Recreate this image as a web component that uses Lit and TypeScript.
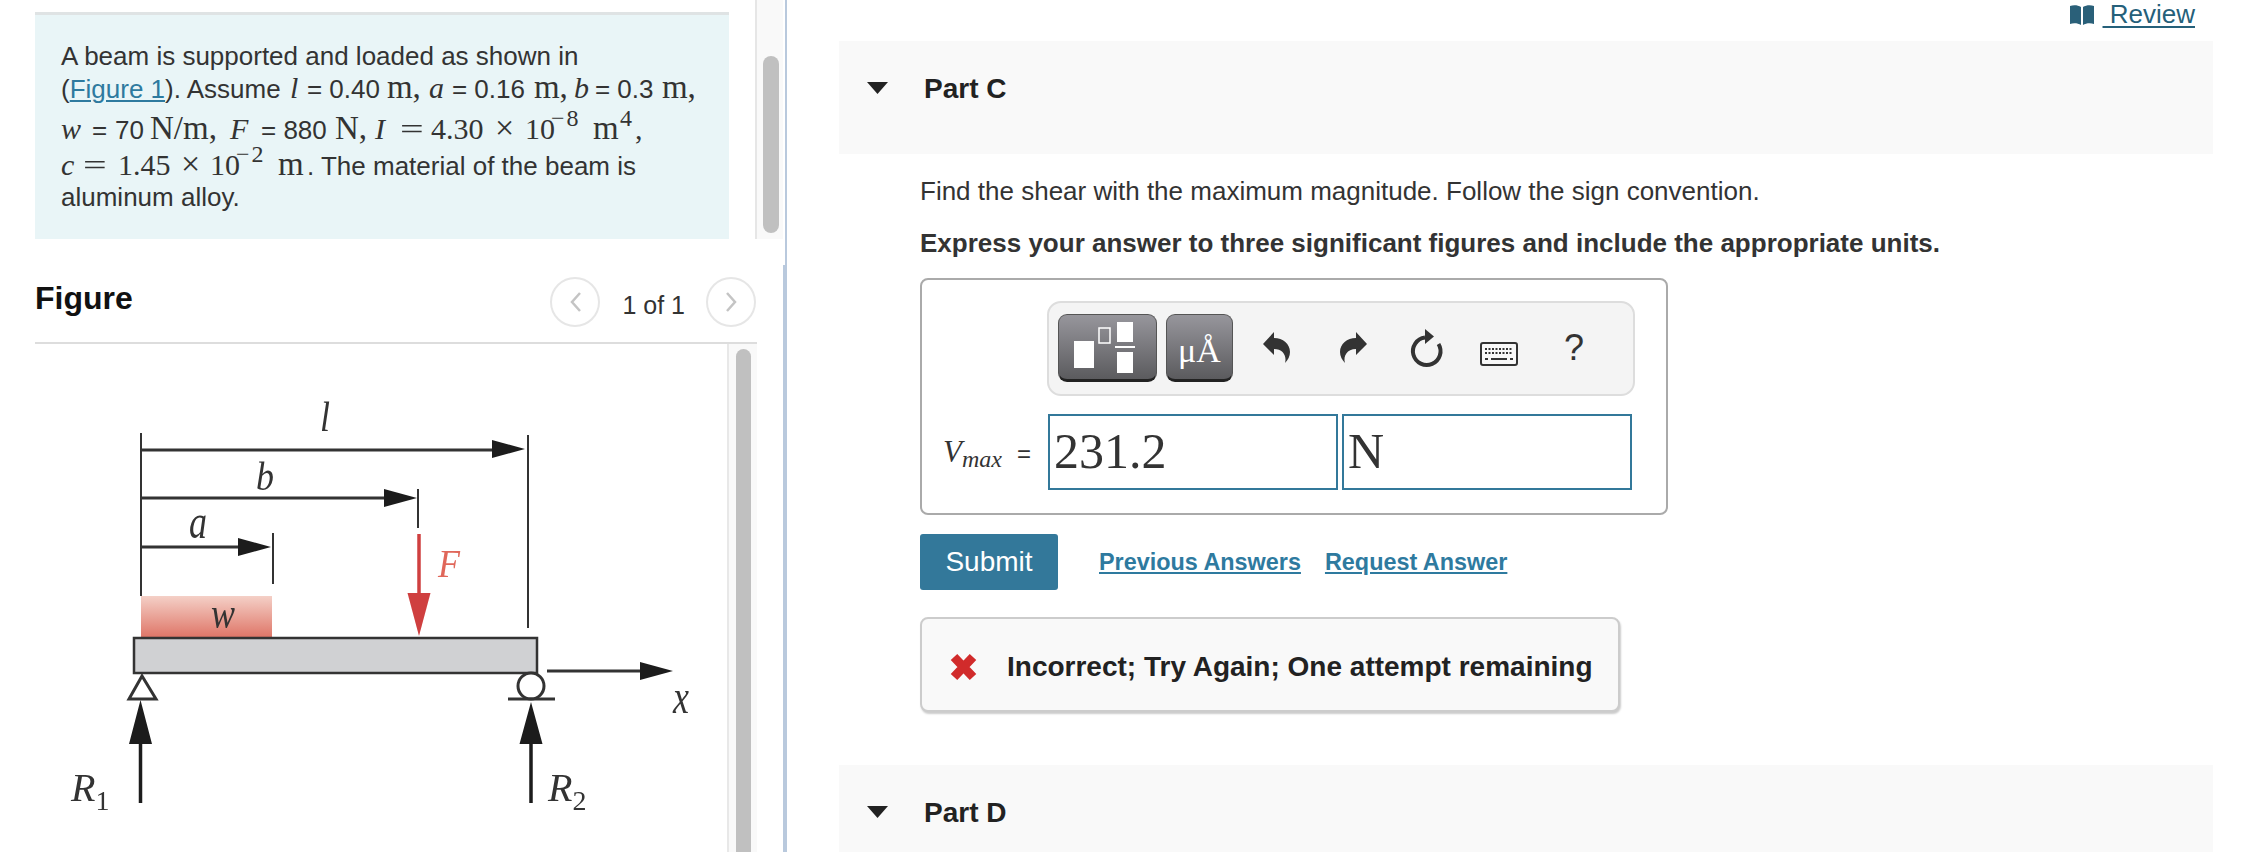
import { LitElement, css, html, svg } from 'lit';
import { customElement } from 'lit/decorators.js';

const caret = html`<svg class="caret" viewBox="0 0 21 12"><path d="M0 0H21L10.5 12Z" fill="#222"/></svg>`;

const arrowHead = (x: number, y: number, len: number, half: number) =>
  svg`<path d="M${x} ${y}L${x - len} ${y - half}V${y + half}Z" fill="#1c1c1c"/>`;

// the figure's letters are a tall narrow italic, so stretch the serif vertically
const label = (x: number, y: number, text: string, stretch: number, fill = '#333') =>
  svg`<text transform="translate(${x} ${y}) scale(1 ${stretch})" font-size="36" text-anchor="middle" style="fill:${fill}">${text}</text>`;

// typeset math runs: text, style class, advance in px
type Tok = [string, string, number];

const runs = (toks: Tok[]) =>
  toks.map(([text, cls, w]) => html`<span class="t ${cls}" style="width:${w}px">${text}</span>`);

const line2: Tok[] = [
  ['', 's', 2],
  ['l', 'i', 17],
  ['= 0.40', 's', 80],
  ['m,', 'u', 42],
  ['a', 'i', 23],
  ['= 0.16', 's', 82],
  ['m,', 'u', 40],
  ['b', 'i', 21],
  ['= 0.3', 's', 67],
  ['m,', 'u', 38],
];

const line3: Tok[] = [
  ['w', 'i', 31],
  ['=', 's', 23],
  ['70', 's', 35],
  ['N/m,', 'u', 80],
  ['F', 'i', 31],
  ['= 880', 's', 74],
  ['N,', 'u', 40],
  ['I', 'i', 25],
  ['=', 'eq', 31],
  ['4.30', 'n', 64],
  ['×', 'x', 30],
  ['10', 'n', 26],
  ['−8', 'up', 42],
  ['m', 'u', 27],
  ['4', 'up', 15],
  [',', 'n', 10],
];

const line4: Tok[] = [
  ['c', 'i', 22],
  ['=', 'eq', 35],
  ['1.45', 'n', 63],
  ['×', 'x', 29],
  ['10', 'n', 26],
  ['−2', 'up', 42],
  ['m', 'u', 29],
];

@customElement('beam-figure')
export class BeamFigure extends LitElement {
  static override styles = css`
    :host { display: block; width: 727px; height: 508px; flex: none; }
    svg { display: block; filter: blur(0.4px); }
    text { font-family: "Liberation Serif", serif; font-style: italic; fill: #333; }
  `;

  override render() {
    // coordinates are page px, the viewBox starts where the figure area starts
    return html`<svg width="727" height="508" viewBox="0 344 727 508">
      <defs>
        <linearGradient id="load" x1="0" y1="0" x2="0" y2="1">
          <stop offset="0" stop-color="#f4d0c7"/>
          <stop offset="1" stop-color="#df7668"/>
        </linearGradient>
      </defs>
      <g stroke="#333" stroke-width="2" fill="none">
        <path d="M141 433V596M528 435V628M418 489V528M273 533V584"/>
        <path d="M141 450H495M141 498H388M141 547H240" stroke-width="3"/>
      </g>
      ${arrowHead(525, 449, 33, 9)}
      ${arrowHead(417, 498, 33, 9)}
      ${arrowHead(271, 547, 33, 9)}
      <rect x="141" y="596" width="131" height="41" fill="url(#load)"/>
      <rect x="134" y="638" width="403" height="35" fill="#d0d1d3" stroke="#333" stroke-width="2.5"/>
      <path d="M419 534V595" stroke="#cf3f3f" stroke-width="3.5"/>
      <path d="M407.500 593H430.500L419 636Z" fill="#cf3f3f"/>
      <path d="M142 676L129 699H156Z" fill="#fff" stroke="#333" stroke-width="3"/>
      <ellipse cx="531" cy="686" rx="13" ry="13" fill="#fff" stroke="#333" stroke-width="3"/>
      <path d="M508 699H555" stroke="#333" stroke-width="3"/>
      <path d="M547 671H645" stroke="#333" stroke-width="3"/>
      ${arrowHead(673, 671, 33, 9)}
      <path d="M140.500 803V742M531 803V742" stroke="#1c1c1c" stroke-width="3.500"/>
      <path d="M129 744H152L140.500 700Z M519.500 744H542.500L531 702Z" fill="#1c1c1c"/>
      ${label(325, 431, 'l', 1.15)}
      ${label(265, 490, 'b', 1.12)}
      ${label(198, 538, 'a', 1.35)}
      ${label(449, 577, 'F', 1.1, '#e0675a')}
      ${label(223, 628, 'w', 1.25)}
      ${label(681, 713, 'x', 1.35)}
      <text x="71" y="801" font-size="40">R<tspan dy="9" font-size="28" font-style="normal">1</tspan></text>
      <text x="548" y="801" font-size="40">R<tspan dy="9" font-size="28" font-style="normal">2</tspan></text>
    </svg>`;
  }
}

@customElement('app-root')
export class AppRoot extends LitElement {
  static override styles = css`
    :host {
      display: flex;
      width: 2258px;
      height: 852px;
      overflow: hidden;
      background: #fff;
      color: #333;
      font-family: "Liberation Sans", Arial, sans-serif;
      font-size: 26px;
    }
    a { color: #2e7a9f; }
    .left { width: 783px; flex: none; display: flex; flex-direction: column; }
    .divider { width: 4px; flex: none; display: flex; flex-direction: column; }
    .divider .thin { height: 265px; margin-left: 2px; background: #b9c9dd; }
    .divider .thick { flex: 1; background: #b9c9dd; }
    .topRow { display: flex; height: 239px; flex: none; }
    .problem {
      box-sizing: border-box;
      width: 694px;
      margin-left: 35px;
      margin-right: 26px;
      background: #e9f5f7;
      border-top: 3px solid #dfe3e4;
      margin-top: 12px;
      padding: 25px 0 0 26px;
      flex: none;
    }
    .ln { white-space: nowrap; height: 32px; line-height: 32px; }
    .ln2 { line-height: 30px; }
    .ln3 { height: 40px; line-height: 47px; }
    .ln4 { height: 37px; line-height: 39px; }
    .t { display: inline-block; white-space: pre; }
    .t.i { font-family: "Liberation Serif", serif; font-style: italic; font-size: 30px; }
    .t.u { font-family: "Liberation Serif", serif; font-size: 33px; }
    .t.n { font-family: "Liberation Serif", serif; font-size: 30px; }
    .t.eq { font-family: "Liberation Serif", serif; font-size: 30px; transform: scaleX(1.4); transform-origin: left; }
    .t.x { font-family: "Liberation Serif", serif; font-size: 34px; }
    .t.up { font-family: "Liberation Serif", serif; font-size: 24px; letter-spacing: 2px; position: relative; top: -13px; }
    .track { width: 28px; background: #f9f9f9; border-left: 2px solid #e6e6e6; box-sizing: border-box; padding: 56px 4px 6px 6px; flex: none; }
    .thumb { height: 100%; background: #c0c0c0; border-radius: 8px; }
    .figHead { display: flex; align-items: center; height: 105px; margin-left: 35px; width: 722px; box-sizing: border-box; border-bottom: 2px solid #ddd; flex: none; }
    .figTitle { font-weight: bold; font-size: 32px; color: #111; margin-right: auto; margin-top: 16px; }
    .circle { box-sizing: border-box; width: 50px; height: 50px; border: 2px solid #e6e6e6; border-radius: 50%; display: flex; align-items: center; justify-content: center; margin-top: 22px; margin-right: 1px; }
    .circle svg { width: 13px; height: 22px; }
    .pager { margin: 30px 21px 0; font-size: 25px; color: #333; }
    .figRow { display: flex; flex: 1; min-height: 0; }
    .figTrack { width: 30px; background: #f9f9f9; border-left: 2px solid #e8e8e8; box-sizing: border-box; padding: 5px 6px 0 7px; flex: none; }
    .figTrack .thumb { border-radius: 8px 8px 0 0; }

    .right { flex: 1; min-width: 0; padding-left: 52px; padding-right: 45px; }
    .reviewBar { height: 41px; display: flex; justify-content: flex-end; align-items: flex-start; padding-right: 18px; }
    .review { display: flex; align-items: center; gap: 8px; color: #25607a; text-decoration: underline; text-underline-offset: 3px; font-size: 26px; line-height: 29px; }
    .review svg { width: 26px; height: 22px; }
    .partHead { display: flex; align-items: center; background: #f9f9f9; font-weight: bold; font-size: 28px; color: #222; padding-left: 28px; height: 113px; padding-bottom: 20px; box-sizing: border-box; }
    .partHead span { margin-top: 2px; }
    .partHead.d { height: 130px; margin-top: 53px; padding-bottom: 36px; }
    .caret { width: 21px; height: 12px; margin-right: 36px; }
    .body { padding-left: 81px; }
    .q { margin: 23px 0 0; line-height: 28px; font-size: 26px; }
    .q.b { font-weight: bold; margin-top: 24px; }
    .answer { box-sizing: border-box; width: 748px; height: 237px; margin-top: 21px; border: 2px solid #aaa; border-radius: 8px; padding: 21px 0 0 125px; }
    .tools { box-sizing: border-box; width: 588px; height: 95px; background: #f4f4f4; border: 2px solid #ddd; border-radius: 14px; display: flex; align-items: flex-start; }
    .btn { box-sizing: border-box; height: 68px; margin-top: 11px; border-radius: 9px; background: linear-gradient(#97969c, #5b5b5e); border: 1px solid #555; border-bottom: 3px solid #222; flex: none; color: #fff; }
    .btn.tpl { width: 99px; margin-left: 9px; }
    .btn.tpl svg { display: block; }
    .btn.unit { width: 67px; margin-left: 9px; font-family: "Liberation Serif", serif; font-size: 34px; text-align: center; line-height: 72px; }
    .ic { flex: none; margin-top: 29px; }
    .undo { margin-left: 30px; width: 27px; height: 31px; }
    .redo { margin-left: 50px; width: 27px; height: 31px; }
    .reset { margin-left: 41px; width: 36px; height: 40px; margin-top: 26px; }
    .kbd { margin-left: 36px; width: 38px; height: 24px; margin-top: 39px; }
    .help { margin-left: 46px; font-size: 36px; line-height: 36px; margin-top: 27px; color: #333; }
    .ansRow { display: flex; align-items: center; margin-top: 18px; gap: 4px; margin-left: -125px; }
    .lbl { width: 126px; box-sizing: border-box; padding-left: 21px; white-space: nowrap; font-size: 24px; flex: none; margin-right: -4px; }
    .lbl .v { font-family: "Liberation Serif", serif; font-style: italic; font-size: 31px; }
    .lbl .s { font-family: "Liberation Serif", serif; font-style: italic; font-size: 24px; position: relative; top: 5px; margin-right: 15px; }
    .box { box-sizing: border-box; height: 76px; width: 290px; border: 2px solid #33789a; font-family: "Liberation Serif", serif; font-size: 50px; line-height: 70px; padding-left: 4px; color: #333; }
    .actions { display: flex; align-items: center; margin-top: 19px; }
    .submit { box-sizing: border-box; width: 138px; height: 56px; background: #33789a; color: #fff; border-radius: 3px; font-size: 28px; display: flex; align-items: center; justify-content: center; }
    .link { font-weight: bold; font-size: 23.4px; margin-left: 24px; }
    .link.first { margin-left: 41px; }
    .feedback { box-sizing: border-box; width: 700px; height: 95px; margin-top: 27px; background: #f9f9f9; border: 2px solid #ccc; border-radius: 8px; box-shadow: 1px 2px 2px #ccc; display: flex; align-items: center; padding: 4px 0 0 27px; font-weight: bold; font-size: 28px; color: #222; }
    .feedback svg { width: 29px; height: 28px; margin-right: 29px; flex: none; }
  `;

  override render() {
    return html`
      <div class="left">
        <div class="topRow">
          <div class="problem">
            <div class="ln">A beam is supported and loaded as shown in</div>
            <div class="ln ln2">(<a href="#">Figure 1</a>). Assume ${runs(line2)}</div>
            <div class="ln ln3">${runs(line3)}</div>
            <div class="ln ln4">${runs(line4)}. The material of the beam is</div>
            <div class="ln">aluminum alloy.</div>
          </div>
          <div class="track"><div class="thumb"></div></div>
        </div>
        <div class="figHead">
          <div class="figTitle">Figure</div>
          <div class="circle"><svg viewBox="0 0 13 22"><path d="M11 2L3 11L11 20" fill="none" stroke="#c4c4c4" stroke-width="2.500"/></svg></div>
          <div class="pager">1 of 1</div>
          <div class="circle"><svg viewBox="0 0 13 22"><path d="M2 2L10 11L2 20" fill="none" stroke="#c4c4c4" stroke-width="2.500"/></svg></div>
        </div>
        <div class="figRow">
          <beam-figure></beam-figure>
          <div class="figTrack"><div class="thumb"></div></div>
        </div>
      </div>
      <div class="divider"><div class="thin"></div><div class="thick"></div></div>
      <div class="right">
        <div class="reviewBar">
          <a class="review" href="#">
            <svg viewBox="0 0 26 22"><path d="M1 2C4 1 9 1 12 3V21C9 19 4 19 1 20ZM14 3C17 1 22 1 25 2V20C22 19 17 19 14 21Z" fill="#2a6079"/></svg>
            <span>&nbsp;Review</span>
          </a>
        </div>
        <div class="partHead">${caret}<span>Part C</span></div>
        <div class="body">
          <p class="q">Find the shear with the maximum magnitude. Follow the sign convention.</p>
          <p class="q b">Express your answer to three significant figures and include the appropriate units.</p>
          <div class="answer">
            <div class="tools">
              <div class="btn tpl">
                <svg width="97" height="64" viewBox="0 0 97 64">
                  <rect x="15" y="26" width="20" height="27" fill="#fff"/>
                  <rect x="40" y="13" width="11" height="15" fill="none" stroke="#fff" stroke-width="1.500"/>
                  <rect x="58" y="7" width="16" height="20" fill="#fff"/>
                  <rect x="56" y="31" width="20" height="2" fill="#fff"/>
                  <rect x="58" y="37" width="16" height="21" fill="#fff"/>
                </svg>
              </div>
              <div class="btn unit">μÅ</div>
              <svg class="ic undo" viewBox="0 0 27 31"><path d="M0 12L11 0V6C20 6 27 12 27 20C27 24 25 28 22 31C24 24 20 17 11 17V23Z" fill="#333"/></svg>
              <svg class="ic redo" viewBox="0 0 27 31"><path d="M27 12L16 0V6C7 6 0 12 0 20C0 24 2 28 5 31C3 24 7 17 16 17V23Z" fill="#333"/></svg>
              <svg class="ic reset" viewBox="-18 -22 36 40"><path d="M-1 -13.500A13.800 13.800 0 1 0 12.500 -7" fill="none" stroke="#333" stroke-width="4"/><path d="M-1 -22L8 -14.500L-1 -7Z" fill="#333"/></svg>
              <svg class="ic kbd" viewBox="0 0 38 24">
                <rect x="1" y="1" width="36" height="22" rx="2" fill="#f8f8f8" stroke="#333" stroke-width="2"/>
                <path d="M5 7H33M5 11H33" stroke="#333" stroke-width="2" stroke-dasharray="2 1.500"/>
                <path d="M11 17H27" stroke="#333" stroke-width="2"/>
                <path d="M5 17H8M30 17H33" stroke="#333" stroke-width="2"/>
              </svg>
              <div class="help">?</div>
            </div>
            <div class="ansRow">
              <div class="lbl"><span class="v">V</span><span class="s">max</span>=</div>
              <div class="box">231.2</div>
              <div class="box">N</div>
            </div>
          </div>
          <div class="actions">
            <div class="submit">Submit</div>
            <a class="link first" href="#">Previous Answers</a>
            <a class="link" href="#">Request Answer</a>
          </div>
          <div class="feedback">
            <svg viewBox="0 0 29 28"><path d="M5 4L24 24M24 4L5 24" stroke="#d12b2b" stroke-width="9"/></svg>
            <span>Incorrect; Try Again; One attempt remaining</span>
          </div>
        </div>
        <div class="partHead d">${caret}<span>Part D</span></div>
      </div>
    `;
  }
}
